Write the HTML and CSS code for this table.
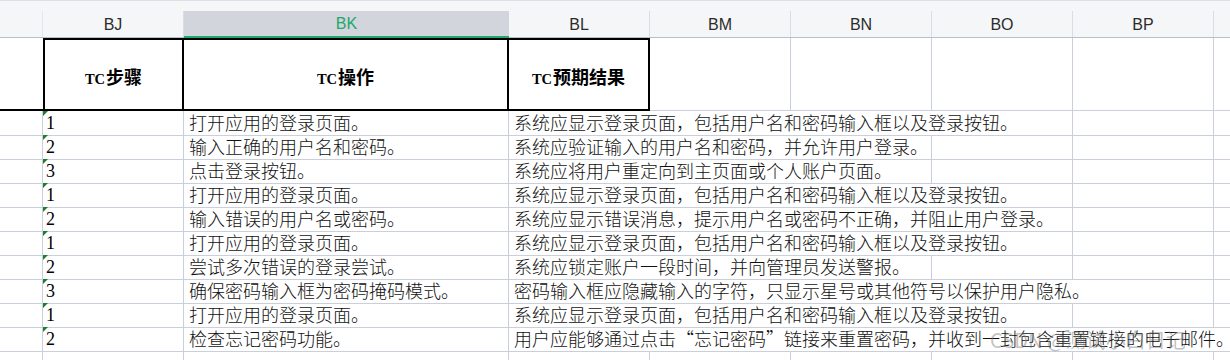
FILE: index.html
```html
<!DOCTYPE html>
<html lang="zh-CN">
<head>
<meta charset="utf-8">
<title>TC 表格</title>
<link rel="stylesheet" href="styles.css">
</head>
<body>
<div class="sheet">
  <div class="colhead">
    <div class="ch corner"></div>
    <div class="ch">BJ</div>
    <div class="ch sel">BK</div>
    <div class="ch">BL</div>
    <div class="ch">BM</div>
    <div class="ch">BN</div>
    <div class="ch">BO</div>
    <div class="ch">BP</div>
    <div class="ch rest"></div>
  </div>

  <div class="row hdr">
    <div class="c rn"></div>
    <div class="c th first"><span class="lbl"><span class="lat">TC</span>步骤</span></div>
    <div class="c th"><span class="lbl"><span class="lat">TC</span>操作</span></div>
    <div class="c th"><span class="lbl"><span class="lat">TC</span>预期结果</span></div>
    <div class="c e"></div><div class="c e"></div><div class="c e"></div><div class="c e"></div><div class="c e last"></div>
  </div>

  <div class="row">
    <div class="c rn"></div><div class="c step">1</div><div class="c txt">打开应用的登录页面。</div>
    <div class="c txt s4">系统应显示登录页面，包括用户名和密码输入框以及登录按钮。</div>
    <div class="c e"></div><div class="c e last"></div>
  </div>
  <div class="row">
    <div class="c rn"></div><div class="c step">2</div><div class="c txt">输入正确的用户名和密码。</div>
    <div class="c txt s3">系统应验证输入的用户名和密码，并允许用户登录。</div>
    <div class="c e"></div><div class="c e"></div><div class="c e last"></div>
  </div>
  <div class="row">
    <div class="c rn"></div><div class="c step">3</div><div class="c txt">点击登录按钮。</div>
    <div class="c txt s3">系统应将用户重定向到主页面或个人账户页面。</div>
    <div class="c e"></div><div class="c e"></div><div class="c e last"></div>
  </div>
  <div class="row">
    <div class="c rn"></div><div class="c step">1</div><div class="c txt">打开应用的登录页面。</div>
    <div class="c txt s4">系统应显示登录页面，包括用户名和密码输入框以及登录按钮。</div>
    <div class="c e"></div><div class="c e last"></div>
  </div>
  <div class="row">
    <div class="c rn"></div><div class="c step">2</div><div class="c txt">输入错误的用户名或密码。</div>
    <div class="c txt s4">系统应显示错误消息，提示用户名或密码不正确，并阻止用户登录。</div>
    <div class="c e"></div><div class="c e last"></div>
  </div>
  <div class="row">
    <div class="c rn"></div><div class="c step">1</div><div class="c txt">打开应用的登录页面。</div>
    <div class="c txt s4">系统应显示登录页面，包括用户名和密码输入框以及登录按钮。</div>
    <div class="c e"></div><div class="c e last"></div>
  </div>
  <div class="row">
    <div class="c rn"></div><div class="c step">2</div><div class="c txt">尝试多次错误的登录尝试。</div>
    <div class="c txt s3">系统应锁定账户一段时间，并向管理员发送警报。</div>
    <div class="c e"></div><div class="c e"></div><div class="c e last"></div>
  </div>
  <div class="row">
    <div class="c rn"></div><div class="c step">3</div><div class="c txt">确保密码输入框为密码掩码模式。</div>
    <div class="c txt s5">密码输入框应隐藏输入的字符，只显示星号或其他符号以保护用户隐私。</div>
    <div class="c e last"></div>
  </div>
  <div class="row">
    <div class="c rn"></div><div class="c step">1</div><div class="c txt">打开应用的登录页面。</div>
    <div class="c txt s4">系统应显示登录页面，包括用户名和密码输入框以及登录按钮。</div>
    <div class="c e"></div><div class="c e last"></div>
  </div>
  <div class="row">
    <div class="c rn"></div><div class="c step">2</div><div class="c txt">检查忘记密码功能。</div>
    <div class="c txt s6">用户应能够通过点击“忘记密码”链接来重置密码，并收到一封包含重置链接的电子邮件。</div>
  </div>
  <div class="row">
    <div class="c rn"></div><div class="c"></div><div class="c"></div><div class="c"></div>
    <div class="c e"></div><div class="c e"></div><div class="c e"></div><div class="c e"></div><div class="c e last"></div>
  </div>

  <div class="watermark">CSDN @测试小白日记</div>
</div>
</body>
</html>
```

FILE: styles.css
```css
* { box-sizing: border-box; }
html, body { margin: 0; padding: 0; background: #fff; }
body { width: 1230px; height: 360px; overflow: hidden; }

.sheet {
  position: relative;
  width: 1230px;
  height: 360px;
  overflow: hidden;
}

.colhead, .row {
  display: grid;
  grid-template-columns: 43px 141px 325px 141px 141px 141px 141px 141px 16px;
}

.colhead {
  height: 38px;
  background: #f5f6f8;
  border-top: 1px solid #dcdfe5;
  border-bottom: 1px solid #b7bfcd;
}

.ch {
  align-self: end;
  height: 26px;
  border-right: 1px solid #dadde4;
  font-family: "Liberation Sans", "Noto Sans", sans-serif;
  font-size: 16px;
  color: #2b2b2b;
  display: flex;
  align-items: center;
  justify-content: center;
  padding-top: 1px;
}
.ch.corner { border-right: 1px solid #e2e5ea; }
.ch.rest { border-right: none; }
.ch.sel {
  background: #d2d5dc;
  color: #21a86b;
  border-bottom: 2px solid #21a86b;
  border-right: none;
  margin-bottom: -1px;
  height: 27px;
}

.row { height: 24px; }
.row.hdr { height: 73px; }

.c {
  border-right: 1px solid #c9cfdb;
  border-bottom: 1px solid #c9cfdb;
  white-space: nowrap;
  overflow: visible;
  position: relative;
}
.c.last { border-right: none; }
.c.rn { border-right: 1px solid #c9cfdb; }

.hdr .rn {
  border-right: none;
  border-bottom: 2px solid #000;
}
.th {
  border-top: 2px solid #000;
  border-bottom: 2px solid #000;
  border-right: 2px solid #000;
  display: flex;
  align-items: center;
  justify-content: center;
  padding-top: 5px;
  color: #000;
}
.th.first { border-left: 2px solid #000; }
.th .lbl {
  font-family: "Noto Sans CJK SC", sans-serif;
  font-weight: 700;
  font-size: 18px;
  line-height: 24px;
}
.th .lat {
  font-family: "Liberation Serif", serif;
  font-size: 14.5px;
  font-weight: 700;
  margin-right: 1px;
}

.step {
  font-family: "Liberation Serif", serif;
  font-size: 18px;
  line-height: 24px;
  padding-left: 3px;
  color: #000;
}
.step::before {
  content: "";
  position: absolute;
  left: 0;
  top: 0;
  border-top: 5px solid #1b7d2f;
  border-right: 5px solid transparent;
}

.txt {
  font-family: "Noto Sans CJK SC", sans-serif;
  font-weight: 300;
  font-size: 18px;
  line-height: 23px;
  padding-left: 5px;
  color: #111;
}
.s3 { grid-column: span 3; }
.s4 { grid-column: span 4; }
.s5 { grid-column: span 5; }
.s6 { grid-column: span 6; border-right: none; }

.watermark {
  position: absolute;
  left: 990px;
  top: 328px;
  font-family: "Noto Sans CJK SC", "Liberation Sans", sans-serif;
  font-size: 20px;
  line-height: 24px;
  color: rgba(120, 120, 120, 0.45);
  white-space: nowrap;
  pointer-events: none;
}
```
